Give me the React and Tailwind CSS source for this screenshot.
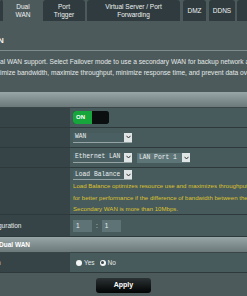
import React from "react";

function Tab({ className, active, children }) {
  return (
    <div
      className={
        "flex h-full shrink-0 items-center justify-center rounded-t-[3px] text-center text-[6.5px] leading-[8px] text-[#eef2f2] " +
        (active ? "bg-[#4d5a5b] " : "bg-[#2f3b3e] ") +
        className
      }
    >
      {children}
    </div>
  );
}

function Arrow() {
  return (
    <div className="ml-auto flex h-[9px] w-[8px] shrink-0 items-center justify-center bg-[#dfe5e5]">
      <svg width="5" height="4" viewBox="0 0 5 4">
        <path d="M0.5 0.8 L2.5 3 L4.5 0.8" fill="none" stroke="#333" strokeWidth="1" />
      </svg>
    </div>
  );
}

function Row({ label, className, children }) {
  return (
    <div className={"flex border-b border-[#2e393b] " + className}>
      <div className="flex w-[70px] shrink-0 items-center overflow-hidden whitespace-nowrap bg-[#364448] text-[6.5px] text-[#e6ecec]">
        {label}
      </div>
      <div className="flex min-w-0 flex-1 flex-col overflow-hidden bg-[#475a5c] pl-[3px]">{children}</div>
    </div>
  );
}

const selCls =
  "flex h-[10px] w-[59px] items-center border-b border-[#95a3a4] bg-[#4a5f62] pl-[2px] font-['Liberation_Mono',monospace] text-[6.3px] text-[#e8eeee] whitespace-nowrap";

export default function App() {
  return (
    <div className="relative h-[296px] w-[247px] overflow-hidden bg-[#4d5a5b] font-['Liberation_Sans',Arial,sans-serif] text-white">
      {/* tabs */}
      <div className="flex h-[21px] w-[260px]">
        <Tab className="w-[3px]" />
        <Tab active className="ml-[2px] w-[36px]">
          Dual
          <br />
          WAN
        </Tab>
        <Tab className="ml-[2px] w-[42px]">
          Port
          <br />
          Trigger
        </Tab>
        <Tab className="ml-[2px] w-[93px]">
          Virtual Server / Port
          <br />
          Forwarding
        </Tab>
        <Tab className="ml-[3px] w-[23px]">DMZ</Tab>
        <Tab className="ml-[3px] w-[26px]">DDNS</Tab>
        <Tab className="ml-[2px] w-[20px]" />
      </div>

      {/* heading */}
      <div className="mt-[15px] h-[9px] overflow-hidden text-[8px] font-bold leading-[9px] text-[#f2f5f5]">
        <span className="ml-[-2px]">N</span>
      </div>
      <div className="mt-[5px] h-px bg-[#7d8c8d]" />

      {/* description */}
      <div className="mt-[5px] overflow-hidden whitespace-nowrap text-[6.6px] leading-[11px] text-[#e3e9e9]">
        <div>al WAN support. Select Failover mode to use a secondary WAN for backup network access.</div>
        <div>imize bandwidth, maximize throughput, minimize response time, and prevent data overload.</div>
      </div>

      {/* table */}
      <div className="mt-[14px]">
        <div className="h-[16px] border-b border-[#3a4547] bg-gradient-to-b from-[#98a6a7] to-[#6b797a]" />

        <Row className="h-[20px]">
          <div className="flex h-full items-center">
            <div className="flex h-[13px] w-[36px] overflow-hidden rounded-[3px] bg-[#111516]">
              <div className="flex w-[19px] items-center bg-[#17a63c] pl-[3px] text-[6px] font-bold text-white">ON</div>
              <div className="flex-1 rounded-[3px] bg-[#0c0f10]" />
            </div>
          </div>
        </Row>

        <Row className="h-[20px]">
          <div className="flex h-full items-center">
            <div className={selCls}>
              WAN
              <Arrow />
            </div>
          </div>
        </Row>

        <Row className="h-[20px]">
          <div className="flex h-full items-center">
            <div className={selCls}>
              Ethernet LAN
              <Arrow />
            </div>
            <div className="ml-[5px] flex h-[10px] w-[53px] items-center whitespace-nowrap bg-[#5e7578] pl-[2px] font-['Liberation_Mono',monospace] text-[6.3px] text-[#e8eeee]">
              LAN Port 1
              <Arrow />
            </div>
          </div>
        </Row>

        <Row className="h-[47px]">
          <div className="pt-[2px]">
            <div className={selCls}>
              Load Balance
              <Arrow />
            </div>
          </div>
          <div className="whitespace-nowrap text-[6.1px] leading-[11.5px] text-[#dcc22e]">
            <div>Load Balance optimizes resource use and maximizes throughput</div>
            <div>for better performance if the difference of bandwidth between the</div>
            <div>Secondary WAN is more than 10Mbps.</div>
          </div>
        </Row>

        <Row className="h-[22px]" label={<span className="ml-[-2px]">guration</span>}>
          <div className="flex h-full items-center">
            <div className="flex h-[12px] w-[19px] items-center bg-[#5d7376] pl-[3px] text-[6.5px] text-[#e8eeee]">1</div>
            <span className="mx-[4px] text-[6.5px] text-[#dfe6e6]">:</span>
            <div className="flex h-[12px] w-[19px] items-center bg-[#5d7376] pl-[3px] text-[6.5px] text-[#e8eeee]">1</div>
          </div>
        </Row>

        <div className="flex h-[16px] items-center border-b border-[#3a4547] bg-gradient-to-b from-[#98a6a7] to-[#6b797a] text-[6.5px] font-bold text-white">
          <span className="ml-[-1px]">Dual WAN</span>
        </div>

        <Row className="h-[20px]" label={<span className="ml-[-3px]">n</span>}>
          <div className="flex h-full items-center pl-[3px] text-[6.5px] text-[#e3e9e9]">
            <span className="h-[6px] w-[6px] rounded-full bg-[#f4f6f6]" />
            <span className="ml-[2px]">Yes</span>
            <span className="ml-[5px] flex h-[6px] w-[6px] items-center justify-center rounded-full bg-[#f4f6f6]">
              <span className="h-[3px] w-[3px] rounded-full bg-[#3a4446]" />
            </span>
            <span className="ml-[2px]">No</span>
          </div>
        </Row>
      </div>

      <div className="mt-[5px] flex justify-center">
        <button className="h-[15px] w-[55px] rounded-[3px] bg-gradient-to-b from-[#2c3335] to-[#040505] text-[7px] font-bold text-white">
          Apply
        </button>
      </div>
    </div>
  );
}
